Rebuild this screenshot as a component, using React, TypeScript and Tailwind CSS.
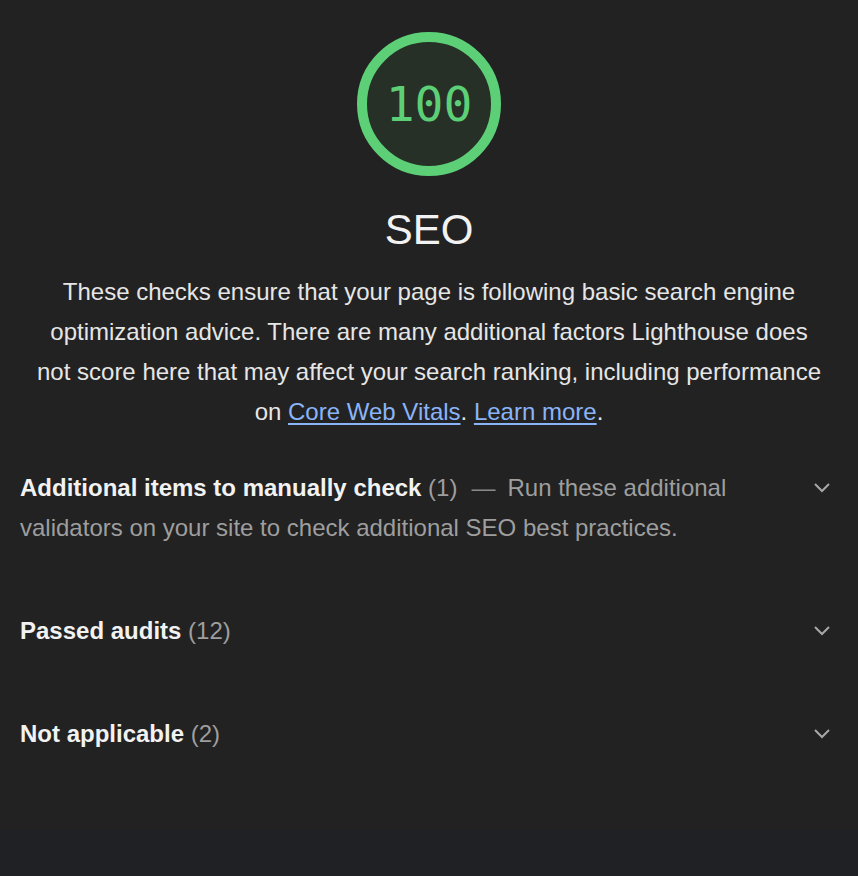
export default function App() {
  return (
    <div className="min-h-screen bg-[#202124] font-['Liberation_Sans',Arial,sans-serif]">
      <div className="bg-[#222222] h-[830px]">
        {/* Gauge */}
        <div className="flex flex-col items-center pt-[32px]">
          <div className="relative w-[144px] h-[144px]">
            <svg viewBox="0 0 144 144" className="w-[144px] h-[144px]">
              <circle cx="72" cy="72" r="67" fill="#273026" stroke="#5ccf77" strokeWidth="10" />
            </svg>
            <div className="absolute inset-0 flex items-center justify-center text-[#5ccf77] text-[48px] font-['DejaVu_Sans_Mono',monospace] leading-none">
              100
            </div>
          </div>
          <h1 className="mt-[30px] text-[42px] leading-[48px] text-[#f2f2f2]">SEO</h1>
          <p className="mt-[18px] text-center text-[24px] leading-[40px] text-[#e6e6e6]">
            These checks ensure that your page is following basic search engine
            <br />
            optimization advice. There are many additional factors Lighthouse does
            <br />
            not score here that may affect your search ranking, including performance
            <br />
            on{' '}
            <a className="text-[#8ab4f8] underline underline-offset-[3px]" href="#">Core Web Vitals</a>.{' '}
            <a className="text-[#8ab4f8] underline underline-offset-[3px]" href="#">Learn more</a>.
          </p>
        </div>

        {/* Groups */}
        <div className="mt-[36px] pl-[20px] pr-[26px] flex flex-col gap-[63px]">
          <Group title="Additional items to manually check" count={1}>
            <span className="text-[#8a8a8a] ml-[14px] mr-[12px]">—</span>
            <span className="text-[#9e9e9e]">
              Run these additional validators on your site to check additional SEO best practices.
            </span>
          </Group>
          <Group title="Passed audits" count={12} />
          <Group title="Not applicable" count={2} />
        </div>
      </div>
    </div>
  )
}

function Group({
  title,
  count,
  children,
}: {
  title: string
  count: number
  children?: React.ReactNode
}) {
  return (
    <div className="flex items-start justify-between">
      <div className="text-[24px] leading-[40px] max-w-[760px]">
        <span className="font-bold text-[#f2f2f2]">{title}</span>{' '}
        <span className="text-[#9e9e9e]">({count})</span>
        {children}
      </div>
      <svg viewBox="0 0 20 12" className="w-[20px] h-[12px] mt-[14px] shrink-0" fill="none" stroke="#a8a8a8" strokeWidth="2">
        <path d="M3 2l7 7 7-7" />
      </svg>
    </div>
  )
}
